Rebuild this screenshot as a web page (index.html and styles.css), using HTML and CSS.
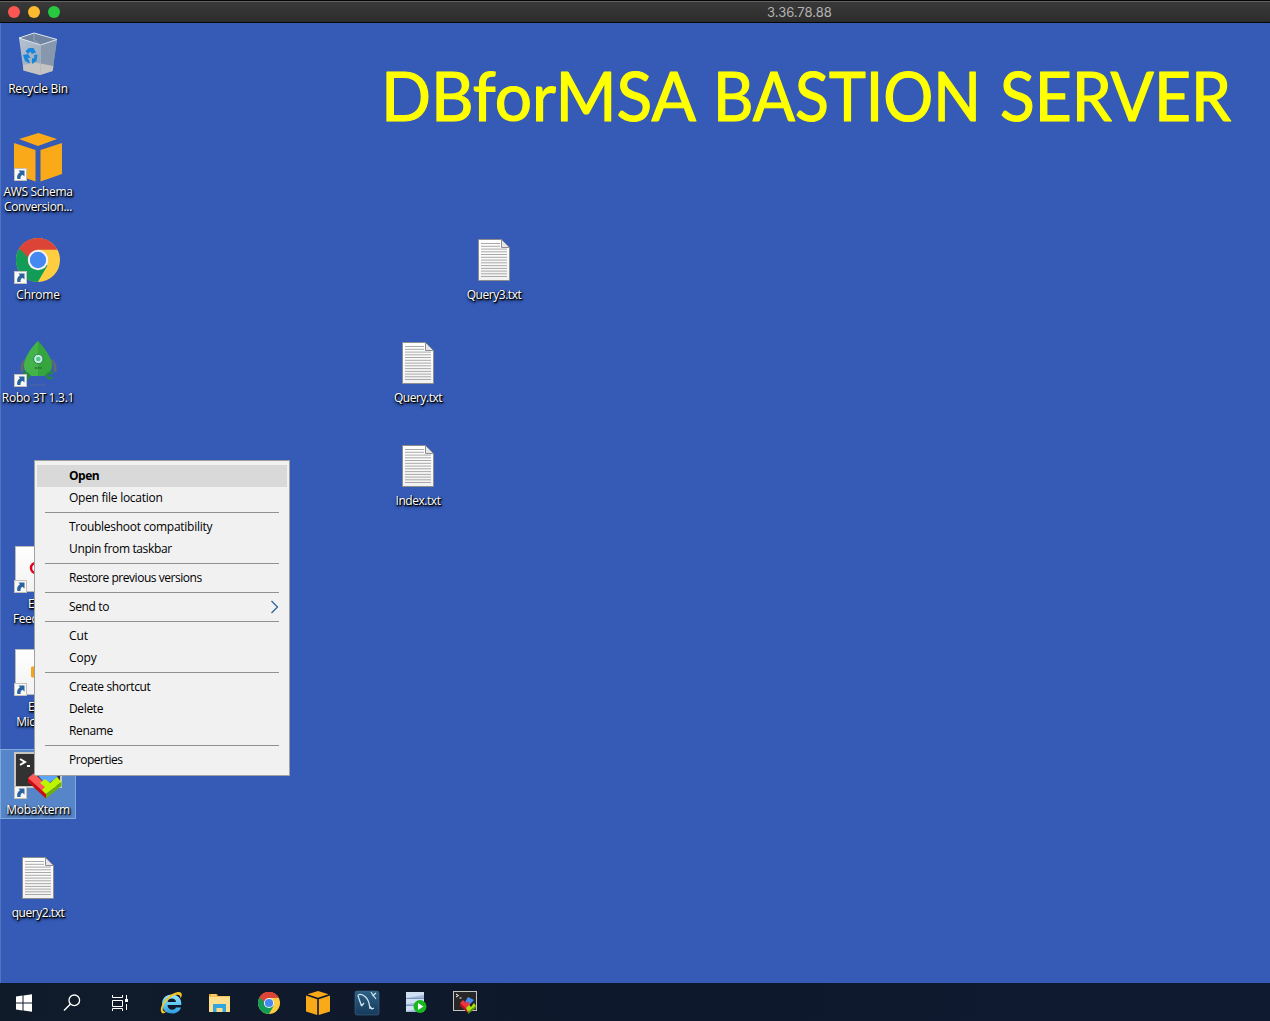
FILE: index.html
```html
<!DOCTYPE html>
<html lang="en">
<head>
<meta charset="utf-8">
<title>3.36.78.88</title>
<link rel="stylesheet" href="styles.css">
</head>
<body>
<svg class="defs" width="0" height="0" aria-hidden="true">
  <defs>
    <linearGradient id="paper" x1="0" y1="0" x2="0" y2="1"><stop offset="0" stop-color="#fff"/><stop offset="1" stop-color="#f2f2f2"/></linearGradient>
    <linearGradient id="bin" x1="0" y1="0" x2="1" y2="1"><stop offset="0" stop-color="#b9c6d6"/><stop offset="1" stop-color="#8797ab"/></linearGradient>
    <linearGradient id="ie" x1="0" y1="0" x2="0" y2="1"><stop offset="0" stop-color="#9be4fb"/><stop offset=".5" stop-color="#62c8f3"/><stop offset="1" stop-color="#2a9be0"/></linearGradient>
    <linearGradient id="dolphin" x1="0" y1="0" x2="0" y2="1"><stop offset="0" stop-color="#2d6186"/><stop offset="1" stop-color="#153a5b"/></linearGradient>
    <symbol id="arrow" viewBox="0 0 13 13">
      <rect x=".5" y=".5" width="12" height="12" fill="#f8f8f8" stroke="#c3c0ba"/>
      <path d="M4.500 2.500H10.500V8.500L8.500 6.700C6.800 7.800 6.300 9.100 6.600 11H3.400C2.500 8.200 3.600 5.900 6 4.300Z" fill="#2b629f"/>
    </symbol>
    <symbol id="doc" viewBox="0 0 48 48">
      <path d="M8.500 2.500H31.500L39.500 10.500V43.500H8.500Z" fill="url(#paper)" stroke="#8d8d8d"/>
      <path d="M11 6.500H30M11 9.300H30M11 12.100H37M11 14.800H37M11 17.500H37M11 20.300H37M11 23.100H37M11 25.800H37M11 28.600H37M11 31.400H37M11 34.100H37M11 36.800H37M11 39.500H37" stroke="#a9a9a9"/>
      <path d="M31.500 2.500V10.500H39.500Z" fill="#e4e6ea" stroke="#8d8d8d"/>
    </symbol>
    <symbol id="cube" viewBox="0 -2 48 50">
      <path d="M24.500 -1L43 5L24 12L5 5ZM0 9L21.500 16V47.500L0 40ZM26.500 16L48 9V40L26.500 47.500Z" fill="#faa919"/>
    </symbol>
    <symbol id="cube-small" viewBox="0 0 24 24">
      <path d="M12 0L22.500 3.200L12 6.800L1.500 3.200ZM0 4.600L11.200 8.200V24L0 20.500ZM12.800 8.200L24 4.600V20.500L12.800 24Z" fill="#faa919"/>
    </symbol>
    <symbol id="chrome" viewBox="0 0 44 44">
      <circle cx="22" cy="22" r="22" fill="#ffcd40"/>
      <path d="M22 22L31.500 27.500L21.800 44A22 22 0 0 1 2.900 11Z" fill="#119c58"/>
      <path d="M2.900 11A22 22 0 0 1 41.100 11.500H22L12.500 27.500Z" fill="#db4437"/>
      <path d="M2.900 11L12.500 27.500L22 22Z" fill="#119c58"/>
      <path d="M3.500 10A22 22 0 0 1 41.100 11.500H22A10.500 10.500 0 0 0 12 19.500Z" fill="#db4437"/>
      <circle cx="22" cy="22" r="10.200" fill="#f4f4f4"/>
      <circle cx="22" cy="22" r="8.200" fill="#4688f1"/>
    </symbol>
  </defs>
</svg>

<header class="titlebar">
  <div class="lights"><i class="light red"></i><i class="light amber"></i><i class="light green"></i></div>
  <span class="host">3.36.78.88</span>
</header>

<main class="desktop">
  <svg class="banner" width="880" height="96" viewBox="0 0 880 96">
    <text x="0" y="68" textLength="315" lengthAdjust="spacingAndGlyphs">DBforMSA</text>
    <text x="332" y="68" textLength="268" lengthAdjust="spacingAndGlyphs">BASTION</text>
    <text x="619" y="68" textLength="231" lengthAdjust="spacingAndGlyphs">SERVER</text>
  </svg>

  <div class="icon c0 r0">
    <svg viewBox="0 0 48 48">
      <path d="M5 7L20 2L43 8.500L38.500 40L26 44L9.500 39.500Z" fill="url(#bin)"/>
      <path d="M5 7L20 2L43 8.500L26.500 14Z" fill="#7184a0"/>
      <path d="M26.500 14L43 8.500L38.500 40L26 44Z" fill="#8797ad"/>
      <path d="M9 34L21 31.500L39.500 35L38.500 40L26 44L9.500 39.500Z" fill="#c5c4c3"/>
      <path d="M5 7L20 2L43 8.500L26.500 14Z" fill="none" stroke="#dce5ed"/>
      <path d="M20 2.500V9L26.500 14V43" fill="none" stroke="#a9b7c7" stroke-width=".7"/>
      <path d="M11.500 20L15 17H19.500L22 21.500L17.800 23L16.500 20.500L14 23ZM20 24L23.500 23.500L22.500 30L18 33V27.500L20.500 27ZM9 24L14 23L16.500 27L13.500 27L15.500 30V32.500L11 30Z" fill="#1685dc"/>
    </svg>
    <span class="label">Recycle Bin</span>
  </div>
  <div class="icon c0 r1">
    <svg viewBox="0 0 48 48"><use href="#cube" y="-2" width="48" height="50"/><use href="#arrow" y="34" width="13" height="13"/></svg>
    <span class="label snug">AWS Schema<br>Conversion...</span>
  </div>
  <div class="icon c0 r2">
    <svg viewBox="0 0 48 48"><use href="#chrome" x="2" y="1" width="44" height="44"/><use href="#arrow" y="34" width="13" height="13"/></svg>
    <span class="label">Chrome</span>
  </div>
  <div class="icon c0 r3">
    <svg viewBox="0 0 48 48">
      <path d="M13 20Q7 22 8 32M36 20Q42 22 41 32" fill="none" stroke="#5d6b70" stroke-width="3"/>
      <path d="M24 1C31 8 38 18 38 26C38 31 34 34 30 36H18C14 34 10 31 10 26C10 18 17 8 24 1Z" fill="#36a53e"/>
      <path d="M24 1C17 8 10 18 10 26C10 31 14 34 18 36H24Z" fill="#44b34a"/>
      <path d="M9 34Q14 32 15 36Q14 40 11 38M39 33Q34 31 33 36Q35 40 38 37" fill="none" stroke="#258b3a" stroke-width="2.500"/>
      <circle cx="24.300" cy="19" r="4.700" fill="#c9ede0" stroke="#1c8651"/>
      <circle cx="24.300" cy="19" r="2.300" fill="#50c78b"/>
      <path d="M20.500 28H28M22 27V29M25 27V29M27 27V29" stroke="#277b30"/>
      <path d="M16 45H32" stroke="#526999"/>
      <use href="#arrow" y="34" width="13" height="13"/>
    </svg>
    <span class="label">Robo 3T 1.3.1</span>
  </div>
  <div class="icon c0 r5">
    <svg viewBox="0 0 48 48"><rect x="1.500" y=".5" width="45" height="45" fill="url(#paper)" stroke="#bbb"/><circle cx="22" cy="22" r="5" fill="none" stroke="#e3001b" stroke-width="2.500"/><use href="#arrow" y="34" width="13" height="13"/></svg>
    <span class="label snug">EC2<br>Feedback</span>
  </div>
  <div class="icon c0 r6">
    <svg viewBox="0 0 48 48"><rect x="1.500" y=".5" width="45" height="45" fill="url(#paper)" stroke="#bbb"/><path d="M17 18L24 16L31 18V28L24 30L17 28Z" fill="#f2a41e"/><use href="#arrow" y="34" width="13" height="13"/></svg>
    <span class="label snug">EC2<br>Micros...</span>
  </div>
  <div class="icon c0 r7 selected">
    <svg viewBox="0 0 48 48">
      <rect x="1" y="1" width="46" height="34" fill="#323232" stroke="#c8c8c0" stroke-width="2"/>
      <path d="M6 7L11 10L6 13M13 14H16" fill="none" stroke="#fff" stroke-width="2"/>
      <path d="M22 21L35 20L44 25L32 33Z" fill="#5ba5ff"/>
      <path d="M14 26L20 21L33 34L32 42L14 30Z" fill="#ff5a5a"/>
      <path d="M14 26L32 42V46.500L14 30Z" fill="#c90d12"/>
      <path d="M26 31L31 27L36 31L43 25L47.500 30L32 42L28 38L31 35Z" fill="#bdf500"/>
      <path d="M32 42L47.500 30V34L32 46.500Z" fill="#6fae0c"/>
      <use href="#arrow" y="34" width="13" height="13"/>
    </svg>
    <span class="label">MobaXterm</span>
  </div>
  <div class="icon c0 r8"><svg viewBox="0 0 48 48"><use href="#doc" width="48" height="48"/></svg><span class="label tight">query2.txt</span></div>
  <div class="icon c6 r2"><svg viewBox="0 0 48 48"><use href="#doc" width="48" height="48"/></svg><span class="label tight">Query3.txt</span></div>
  <div class="icon c5 r3"><svg viewBox="0 0 48 48"><use href="#doc" width="48" height="48"/></svg><span class="label tight">Query.txt</span></div>
  <div class="icon c5 r4"><svg viewBox="0 0 48 48"><use href="#doc" width="48" height="48"/></svg><span class="label tight">Index.txt</span></div>

  <ul class="menu">
    <li class="item active">Open</li>
    <li class="item">Open file location</li>
    <li class="sep"></li>
    <li class="item">Troubleshoot compatibility</li>
    <li class="item snug">Unpin from taskbar</li>
    <li class="sep"></li>
    <li class="item tight">Restore previous versions</li>
    <li class="sep"></li>
    <li class="item snug">Send to<svg width="9" height="14" viewBox="0 0 9 14"><path d="M1.500 1L7.500 7L1.500 13" fill="none" stroke="#25609a" stroke-width="1.200"/></svg></li>
    <li class="sep"></li>
    <li class="item loose">Cut</li>
    <li class="item loose">Copy</li>
    <li class="sep"></li>
    <li class="item snug">Create shortcut</li>
    <li class="item snug">Delete</li>
    <li class="item snug">Rename</li>
    <li class="sep"></li>
    <li class="item tight">Properties</li>
  </ul>
</main>

<footer class="taskbar">
  <div class="cell tool"><svg viewBox="0 0 32 32"><path d="M8 9.500L14.500 8.600V15.500H8ZM15.500 8.400L24 7.200V15.500H15.500ZM8 16.500H14.500V23.500L8 22.500ZM15.500 16.500H24V24.800L15.500 23.600Z" fill="#fff"/></svg></div>
  <div class="cell tool"><svg viewBox="0 0 32 32"><circle cx="18.300" cy="13.300" r="5.300" fill="none" stroke="#fff" stroke-width="1.300"/><path d="M14.500 17L8 23.500" stroke="#fff" stroke-width="1.400"/></svg></div>
  <div class="cell tool"><svg viewBox="0 0 32 32"><path d="M8.500 8V10.500H18.500V8M8.500 13.500H18.500V19.500H8.500ZM8.500 24V21.500H18.500V24M22.500 8V12M22.500 17V23" fill="none" stroke="#fff"/><rect x="21" y="12" width="3" height="3" fill="#fff"/></svg></div>
  <div class="apps">
    <div class="cell"><svg viewBox="0 0 32 32">
      <path d="M26.300 18H12.500C12.700 23.500 19.500 24 21 20.500H26C24.500 24.500 21 26.500 17 26.500C11 26.500 7 22.500 7 17C7 11.300 11.200 7.500 16.700 7.500C23 7.500 26.800 12 26.300 18ZM12.600 15H21C20.700 10.600 13.200 10.400 12.600 15Z" fill="url(#ie)" fill-rule="evenodd"/>
      <path d="M7 26C2.500 21 12 7.500 22 5.300C27 4.200 28 8 25.500 11.500C25.700 8.500 24 7 20.500 8C12 10.800 5.500 21 8.500 24C9.300 25 10.500 24.700 12 24C10 26 8 27 7 26Z" fill="#f5c523"/></svg></div>
    <div class="cell"><svg viewBox="0 0 32 32"><path d="M5 7H13L14 9H26V25H5Z" fill="#e9a928"/><path d="M5 9.500H26V25H5Z" fill="#ffdf8e"/><path d="M7 8H12" stroke="#fff0b5"/><path d="M9 17H22V25H18.500V21H12.500V25H9Z" fill="#35a5df"/></svg></div>
    <div class="cell"><svg viewBox="0 0 32 32"><use href="#chrome" x="5" y="5" width="22" height="22"/></svg></div>
    <div class="cell"><svg viewBox="0 0 32 32"><use href="#cube-small" x="4" y="4" width="24" height="24"/></svg></div>
    <div class="cell"><svg viewBox="0 0 32 32"><rect x="4" y="4" width="24" height="24" rx="2" fill="url(#dolphin)" stroke="#4b7592" stroke-width=".5"/><path d="M10.500 19L9.500 16L7 9C7 6.500 11 7 14 9.500C17 12 18 15 18.500 19L21 22L23 21M10.500 19L13 16M10.500 19V17M18.500 19L19 22M20 5L22 8L25 12M25 6L21.500 9" fill="none" stroke="#d8e7ef" stroke-width="1.200"/></svg></div>
    <div class="cell"><svg viewBox="0 0 32 32"><rect x="6" y="5" width="18" height="20" fill="#9eb7d9"/><path d="M6 5H24V8L6 11ZM6 12H24V15L6 17ZM6 19H24V22L6 24Z" fill="#d0dff1"/><path d="M6 11.500H24M6 18.500H24" stroke="#7898c3"/><circle cx="20" cy="19.500" r="6.500" fill="#18b71e"/><path d="M18 16L23.500 19.500L18 23Z" fill="#fff"/></svg></div>
    <div class="cell"><svg viewBox="0 0 32 32"><rect x="4.500" y="4.500" width="23" height="19" fill="#272727" stroke="#c5c5bd"/><path d="M7 7L9.500 8.500L7 10M10.500 11H12.500" fill="none" stroke="#fff"/><path d="M16 15L19 10L25 13L20 18Z" fill="#438ff5"/><path d="M11 16L14 13L17 16L19 14L21 18L19 24Z" fill="#ef3442"/><path d="M11 16L19 23V26L11 19Z" fill="#bd1320"/><path d="M17 21L20 18L22 20L25 16L27 19L19 25Z" fill="#a8e30b"/><path d="M19 25L27 19V21L19 27Z" fill="#609710"/></svg></div>
  </div>
</footer>
</body>
</html>
```
FILE: styles.css
```css
* { box-sizing: border-box; }
html, body { margin: 0; height: 100%; }
body {
  display: flex;
  flex-direction: column;
  overflow: hidden;
  background: #355bb7;
  font-family: "Open Sans", "Noto Sans", sans-serif;
}
.defs { position: absolute; }

.titlebar {
  flex: 0 0 23px;
  display: flex;
  align-items: center;
  padding: 1px 0 0 8px;
  background: linear-gradient(#3a3a3a, #2c2c2c);
  border-top: 1px solid #050505;
  border-bottom: 1px solid #050505;
  box-shadow: inset 0 1px #626262;
}
.lights { display: flex; gap: 8px; }
.light { width: 12px; height: 12px; border-radius: 50%; }
.red { background: #fc5753; }
.amber { background: #fdbc2e; }
.green { background: #28c840; }
.host {
  margin-left: 707px;
  font: 13px/18px Inter, sans-serif;
  color: #b2b2b2;
}

.desktop {
  flex: 1;
  position: relative;
  border-left: 1px solid #5273bf;
}
.banner {
  display: block;
  margin: 30px 0 0 380px;
}
.banner text {
  font: 67px Lato, sans-serif;
  fill: #ff0;
  stroke: #ff0;
  stroke-width: 1.2px;
  stroke-linejoin: round;
}

.icon {
  position: absolute;
  width: 76px;
  height: 70px;
  display: flex;
  flex-direction: column;
  align-items: center;
  padding-top: 3px;
}
.icon svg { width: 48px; height: 48px; overflow: visible; flex: none; }
.c0 { left: -1px; }
.c5 { left: 379px; }
.c6 { left: 455px; }
.r0 { top: 5px; }
.r1 { top: 108px; }
.r2 { top: 211px; }
.r3 { top: 314px; }
.r4 { top: 417px; }
.r5 { top: 520px; }
.r6 { top: 623px; }
.r7 { top: 726px; }
.r8 { top: 829px; }
.selected { background: #5685c9; border: 1px solid #7ea9dc; padding-top: 2px; }

.label, .item { font-size: 12px; letter-spacing: -.27px; }
.label {
  margin-top: 2px;
  line-height: 15px;
  text-align: center;
  white-space: nowrap;
  color: #fff;
  text-shadow: 1px 1px 1px #000, 1px 1px 2px #000, 0 2px 3px rgba(0, 0, 0, .7);
}

.menu {
  position: absolute;
  left: 33px;
  top: 437px;
  width: 256px;
  margin: 0;
  padding: 4px 2px;
  list-style: none;
  background: #f1f1f1;
  border: 1px solid #a0a0a0;
}
.item {
  display: flex;
  align-items: center;
  justify-content: space-between;
  height: 22px;
  padding: 0 8px 1px 32px;
  line-height: 16px;
  color: #000;
}
.item svg { margin-top: 1px; }
.active { background: #d9d9d9; font-weight: 700; letter-spacing: -.5px; }
.snug { letter-spacing: -.36px; }
.tight { letter-spacing: -.46px; }
.loose { letter-spacing: -.1px; }
.sep { height: 7px; padding: 3px 8px; }
.sep::before { content: ""; display: block; height: 1px; background: #919191; }

.taskbar {
  flex: 0 0 38px;
  display: flex;
  align-items: center;
  padding-top: 1px;
  background: linear-gradient(90deg, #101b2a, #0e182c 45%, #0f1930);
}
.cell { width: 49px; display: flex; justify-content: center; }
.cell svg { width: 32px; height: 32px; }
.tool { width: 48px; }
.apps { display: flex; margin-left: 2px; }
```
